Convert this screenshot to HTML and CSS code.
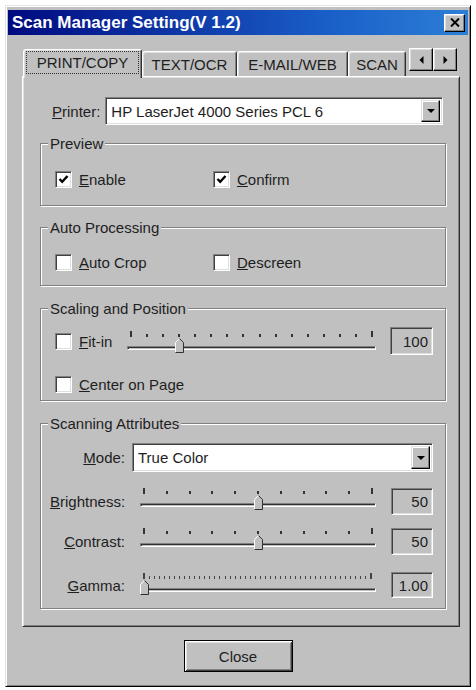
FILE: index.html
```html
<!DOCTYPE html>
<html lang="en">
<head>
<meta charset="utf-8">
<title>Scan Manager Setting</title>
<link rel="stylesheet" href="styles.css">
</head>
<body>
<div class="window">
  <div class="titlebar">
    <span class="title">Scan Manager Setting(V 1.2)</span>
    <span class="tb-close"><svg width="10" height="9" viewBox="0 0 10 9"><path d="M1 0.5 L9 8.5 M9 0.5 L1 8.5" stroke="#000" stroke-width="2"/></svg></span>
  </div>
  <div class="main">
    <div class="tabs">
      <div class="tab active"><span class="focus">PRINT/COPY</span></div>
      <div class="tab t-text">TEXT/OCR</div>
      <div class="tab t-mail">E-MAIL/WEB</div>
      <div class="tab t-scan">SCAN</div>
      <div class="tab-arrows">
        <span class="arrow-btn"><svg width="5" height="8" viewBox="0 0 5 8"><path d="M4.5 0 L4.5 8 L0.5 4 Z" fill="#000"/></svg></span>
        <span class="arrow-btn"><svg width="5" height="8" viewBox="0 0 5 8"><path d="M0.5 0 L0.5 8 L4.5 4 Z" fill="#000"/></svg></span>
      </div>
    </div>
    <div class="panel">
      <div class="printer-row">
        <span class="lbl"><u>P</u>rinter:</span>
        <div class="combo printer">
          <span class="combo-text">HP LaserJet 4000 Series PCL 6</span>
          <span class="drop"><svg width="8" height="4" viewBox="0 0 8 4"><path d="M0 0 L8 0 L4 4 Z" fill="#000"/></svg></span>
        </div>
      </div>

      <div class="group g-preview">
        <div class="group-title">Preview</div>
        <div class="checks">
          <label class="check wide"><span class="box"><svg width="15" height="15" viewBox="0 0 15 15"><path d="M3.5 7 L6.2 9.8 L11.5 4" stroke="#000" stroke-width="2.4" fill="none"/></svg></span><span><u>E</u>nable</span></label>
          <label class="check"><span class="box"><svg width="15" height="15" viewBox="0 0 15 15"><path d="M3.5 7 L6.2 9.8 L11.5 4" stroke="#000" stroke-width="2.4" fill="none"/></svg></span><span><u>C</u>onfirm</span></label>
        </div>
      </div>

      <div class="group g-auto">
        <div class="group-title">Auto Processing</div>
        <div class="checks">
          <label class="check wide"><span class="box"></span><span><u>A</u>uto Crop</span></label>
          <label class="check"><span class="box"></span><span><u>D</u>escreen</span></label>
        </div>
      </div>

      <div class="group g-scale">
        <div class="group-title">Scaling and Position</div>
        <div class="fit-row">
          <label class="check fit"><span class="box"></span><span><u>F</u>it-in</span></label>
          <div class="slider s-fit">
            <div class="ticks"><i></i><i></i><i></i><i></i><i></i><i></i><i></i><i></i><i></i><i></i><i></i><i></i><i></i><i></i><i></i><i></i></div>
            <div class="track"></div>
            <div class="rail"><span class="thumb" style="left:20%"><svg width="9" height="15" viewBox="0 0 9 15"><path d="M0.5 14.5 L0.5 4.5 L4.5 0.5 L8.5 4.5 L8.5 14.5 Z" fill="#c0c0c0"/><path d="M0.5 14.5 L0.5 4.5 L4.5 0.5" stroke="#fff" fill="none"/><path d="M4.5 0.5 L8.5 4.5 L8.5 14.5 L0.5 14.5" stroke="#303030" fill="none"/></svg></span></div>
          </div>
          <div class="num n-fit">100</div>
        </div>
        <div class="center-row">
          <label class="check"><span class="box"></span><span><u>C</u>enter on Page</span></label>
        </div>
      </div>

      <div class="group g-scan">
        <div class="group-title">Scanning Attributes</div>
        <div class="attr-row r-mode">
          <span class="attr-lbl"><u>M</u>ode:</span>
          <div class="combo mode">
            <span class="combo-text">True Color</span>
            <span class="drop"><svg width="8" height="4" viewBox="0 0 8 4"><path d="M0 0 L8 0 L4 4 Z" fill="#000"/></svg></span>
          </div>
        </div>
        <div class="attr-row r-bright">
          <span class="attr-lbl"><u>B</u>rightness:</span>
          <div class="slider">
            <div class="ticks"><i></i><i></i><i></i><i></i><i></i><i></i><i></i><i></i><i></i><i></i><i></i></div>
            <div class="track"></div>
            <div class="rail"><span class="thumb" style="left:50%"><svg width="9" height="15" viewBox="0 0 9 15"><path d="M0.5 14.5 L0.5 4.5 L4.5 0.5 L8.5 4.5 L8.5 14.5 Z" fill="#c0c0c0"/><path d="M0.5 14.5 L0.5 4.5 L4.5 0.5" stroke="#fff" fill="none"/><path d="M4.5 0.5 L8.5 4.5 L8.5 14.5 L0.5 14.5" stroke="#303030" fill="none"/></svg></span></div>
          </div>
          <div class="num">50</div>
        </div>
        <div class="attr-row r-contrast">
          <span class="attr-lbl"><u>C</u>ontrast:</span>
          <div class="slider">
            <div class="ticks"><i></i><i></i><i></i><i></i><i></i><i></i><i></i><i></i><i></i><i></i><i></i></div>
            <div class="track"></div>
            <div class="rail"><span class="thumb" style="left:50%"><svg width="9" height="15" viewBox="0 0 9 15"><path d="M0.5 14.5 L0.5 4.5 L4.5 0.5 L8.5 4.5 L8.5 14.5 Z" fill="#c0c0c0"/><path d="M0.5 14.5 L0.5 4.5 L4.5 0.5" stroke="#fff" fill="none"/><path d="M4.5 0.5 L8.5 4.5 L8.5 14.5 L0.5 14.5" stroke="#303030" fill="none"/></svg></span></div>
          </div>
          <div class="num">50</div>
        </div>
        <div class="attr-row r-gamma">
          <span class="attr-lbl"><u>G</u>amma:</span>
          <div class="slider s-gamma">
            <div class="ticks"><i></i><i></i><i></i><i></i><i></i><i></i><i></i><i></i><i></i><i></i><i></i><i></i><i></i><i></i><i></i><i></i><i></i><i></i><i></i><i></i><i></i><i></i><i></i><i></i><i></i><i></i><i></i><i></i><i></i><i></i><i></i><i></i><i></i><i></i><i></i><i></i><i></i><i></i><i></i><i></i><i></i><i></i><i></i><i></i><i></i><i></i></div>
            <div class="track"></div>
            <div class="rail"><span class="thumb" style="left:0%"><svg width="9" height="15" viewBox="0 0 9 15"><path d="M0.5 14.5 L0.5 4.5 L4.5 0.5 L8.5 4.5 L8.5 14.5 Z" fill="#c0c0c0"/><path d="M0.5 14.5 L0.5 4.5 L4.5 0.5" stroke="#fff" fill="none"/><path d="M4.5 0.5 L8.5 4.5 L8.5 14.5 L0.5 14.5" stroke="#303030" fill="none"/></svg></span></div>
          </div>
          <div class="num n-gamma">1.00</div>
        </div>
      </div>
    </div>
  </div>
  <div class="footer">
    <button class="btn" type="button">Close</button>
  </div>
</div>
</body>
</html>
```

FILE: styles.css
```css
body {
  margin: 0;
  background: #fff;
  font-family: "Liberation Sans", Arial, sans-serif;
  font-size: 15px;
  color: #1e1e1e;
}

u {
  text-decoration: underline;
  text-underline-offset: 1px;
}

.window {
  box-sizing: border-box;
  width: 466px;
  height: 682px;
  margin: 5px 0 0 5px;
  padding: 4px 2px 2px;
  background: #c0c0c0;
  border: 1px solid;
  border-color: #e4e4e4 #000 #000 #e4e4e4;
  box-shadow: inset 1px 1px #fff, inset -1px -1px #808080;
}

.titlebar {
  height: 25px;
  display: flex;
  align-items: center;
  justify-content: space-between;
  padding: 0 3px 0 4px;
  background: linear-gradient(to right, #000a80, #1a5fc8 70%, #2c7fd6);
  color: #fff;
  font-weight: bold;
  font-size: 17px;
  white-space: nowrap;
}

.tb-close {
  box-sizing: border-box;
  width: 21px;
  height: 18px;
  background: #c0c0c0;
  border: 1px solid;
  border-color: #fff #000 #000 #fff;
  box-shadow: inset -1px -1px #808080, inset 1px 1px #dfdfdf;
  display: flex;
  align-items: center;
  justify-content: center;
}

.main {
  padding: 13px 0 0 14px;
}

.tabs {
  display: flex;
  align-items: flex-end;
  height: 28px;
  padding-left: 1px;
}

.tab {
  box-sizing: border-box;
  height: 25px;
  border: 1px solid;
  border-bottom: 0;
  border-color: #fff #303030 transparent #fff;
  border-radius: 3px 3px 0 0;
  box-shadow: inset 1px 1px #dfdfdf, inset -1px 0 #808080;
  background: #c0c0c0;
  display: flex;
  align-items: center;
  justify-content: center;
  white-space: nowrap;
  overflow: hidden;
}

.tab.active {
  position: relative;
  z-index: 1;
  width: 119px;
  height: 29px;
  margin-bottom: -2px;
  align-items: flex-start;
  box-shadow: inset 1px 1px #dfdfdf, inset -1px 0 #808080;
}

.focus {
  box-sizing: border-box;
  width: 113px;
  height: 23px;
  margin-top: 1px;
  border: 1px dotted #333;
  display: flex;
  align-items: center;
  justify-content: center;
}

.t-text { width: 95px; }
.t-mail { width: 111px; }
.t-scan { width: 58px; }

.tab-arrows {
  align-self: flex-start;
  display: flex;
  margin-left: 3px;
}

.arrow-btn {
  box-sizing: border-box;
  width: 24px;
  height: 23px;
  background: #c0c0c0;
  border: 1px solid;
  border-color: #fff #000 #000 #fff;
  box-shadow: inset -1px -1px #808080, inset 1px 1px #dfdfdf;
  display: flex;
  align-items: center;
  justify-content: center;
}

.panel {
  box-sizing: border-box;
  width: 438px;
  height: 551px;
  border: 1px solid;
  border-color: #fff #303030 #303030 #fff;
  box-shadow: inset 1px 1px #dfdfdf, inset -1px -1px #808080;
}

.printer-row {
  display: flex;
  align-items: center;
  height: 28px;
  margin: 20px 16px 0 29px;
}

.combo {
  box-sizing: border-box;
  flex: 1;
  display: flex;
  align-items: stretch;
  background: #fff;
  border: 1px solid;
  border-color: #808080 #fff #fff #808080;
  box-shadow: inset 1px 1px #404040, inset -1px -1px #dfdfdf;
  padding: 2px;
}

.printer {
  height: 28px;
  margin-left: 5px;
}

.combo-text {
  flex: 1;
  display: flex;
  align-items: center;
  padding-left: 3px;
  white-space: nowrap;
}

.drop {
  box-sizing: border-box;
  width: 19px;
  background: #c0c0c0;
  border: 1px solid;
  border-color: #dfdfdf #000 #000 #dfdfdf;
  box-shadow: inset -1px -1px #808080, inset 1px 1px #fff;
  display: flex;
  align-items: center;
  justify-content: center;
}

.group {
  border: 1px solid #808080;
  box-shadow: inset 1px 1px #fff, 1px 1px #fff;
  margin: 18px 13px 0 17px;
  padding: 0 12px 0 14px;
}

.group-title {
  display: table;
  margin: -9px 0 0 -7px;
  padding: 0 2px;
  line-height: 17px;
  background: #c0c0c0;
}

.checks {
  display: flex;
}

.check {
  display: flex;
  align-items: center;
  gap: 7px;
  height: 18px;
  white-space: nowrap;
}

.check.wide {
  width: 158px;
}

.box {
  box-sizing: border-box;
  width: 17px;
  height: 17px;
  background: #fff;
  border: 1px solid;
  border-color: #808080 #fff #fff #808080;
  box-shadow: inset 1px 1px #404040, inset -1px -1px #dfdfdf;
  display: flex;
  align-items: center;
  justify-content: center;
}

.g-preview {
  padding-bottom: 17px;
}

.g-preview .checks {
  margin-top: 18px;
}

.g-auto {
  margin-top: 21px;
  padding-bottom: 14px;
}

.g-auto .checks {
  margin-top: 17px;
}

.g-scale {
  margin-top: 22px;
  padding-bottom: 7px;
}

.fit-row {
  display: flex;
  align-items: flex-start;
  height: 28px;
  margin-top: 10px;
}

.check.fit {
  width: 72px;
  align-self: center;
}

.center-row {
  margin-top: 20px;
}

.slider {
  position: relative;
  flex: 1;
  height: 24px;
}

.s-fit {
  margin: 4px 14px 0 0;
}

.ticks {
  display: flex;
  justify-content: space-between;
  align-items: flex-end;
  height: 6px;
  padding: 0 3px;
}

.ticks i {
  display: block;
  width: 2px;
  height: 3px;
  background: #333;
}

.ticks i:first-child,
.ticks i:last-child {
  height: 6px;
}

.s-gamma .ticks i {
  width: 1px;
  background: #444;
}

.s-gamma .ticks i:first-child,
.s-gamma .ticks i:last-child {
  width: 2px;
}

.track {
  box-sizing: border-box;
  height: 4px;
  margin-top: 9px;
  border: 1px solid;
  border-color: #808080 #fff #fff #808080;
  box-shadow: inset 1px 1px #303030;
}

.rail {
  position: absolute;
  left: 4px;
  right: 4px;
  top: 7px;
  height: 15px;
}

.thumb {
  position: absolute;
  top: 0;
  width: 9px;
  height: 15px;
  margin-left: -4px;
}

.thumb svg {
  display: block;
}

.num {
  box-sizing: border-box;
  width: 42px;
  height: 27px;
  border: 1px solid;
  border-color: #808080 #fff #fff #808080;
  box-shadow: inset 1px 1px #404040, inset -1px -1px #dfdfdf;
  display: flex;
  align-items: center;
  justify-content: flex-end;
  padding-right: 4px;
}

.n-fit {
  width: 43px;
  height: 28px;
}

.n-gamma {
  height: 26px;
}

.g-scan {
  margin-top: 22px;
  padding-bottom: 10px;
}

.attr-row {
  display: flex;
  align-items: flex-start;
  margin-left: -5px;
}

.attr-lbl {
  width: 75px;
  align-self: center;
  text-align: right;
  white-space: nowrap;
}

.r-mode {
  margin-top: 11px;
  height: 29px;
}

.mode {
  height: 29px;
  margin-left: 7px;
}

.attr-row .slider {
  margin: 0 15px 0 15px;
}

.r-bright {
  margin-top: 16px;
}

.r-contrast {
  margin-top: 13px;
}

.r-gamma {
  margin-top: 17px;
}

.r-gamma .slider {
  margin-top: 1px;
}

.footer {
  display: flex;
  justify-content: center;
  margin-top: 13px;
}

.btn {
  box-sizing: border-box;
  width: 109px;
  height: 32px;
  padding: 0;
  font: inherit;
  color: inherit;
  background: #c0c0c0;
  border: 1px solid #000;
  box-shadow: inset 1px 1px #fff, inset -1px -1px #404040, inset 2px 2px #dfdfdf, inset -2px -2px #808080;
}
```
